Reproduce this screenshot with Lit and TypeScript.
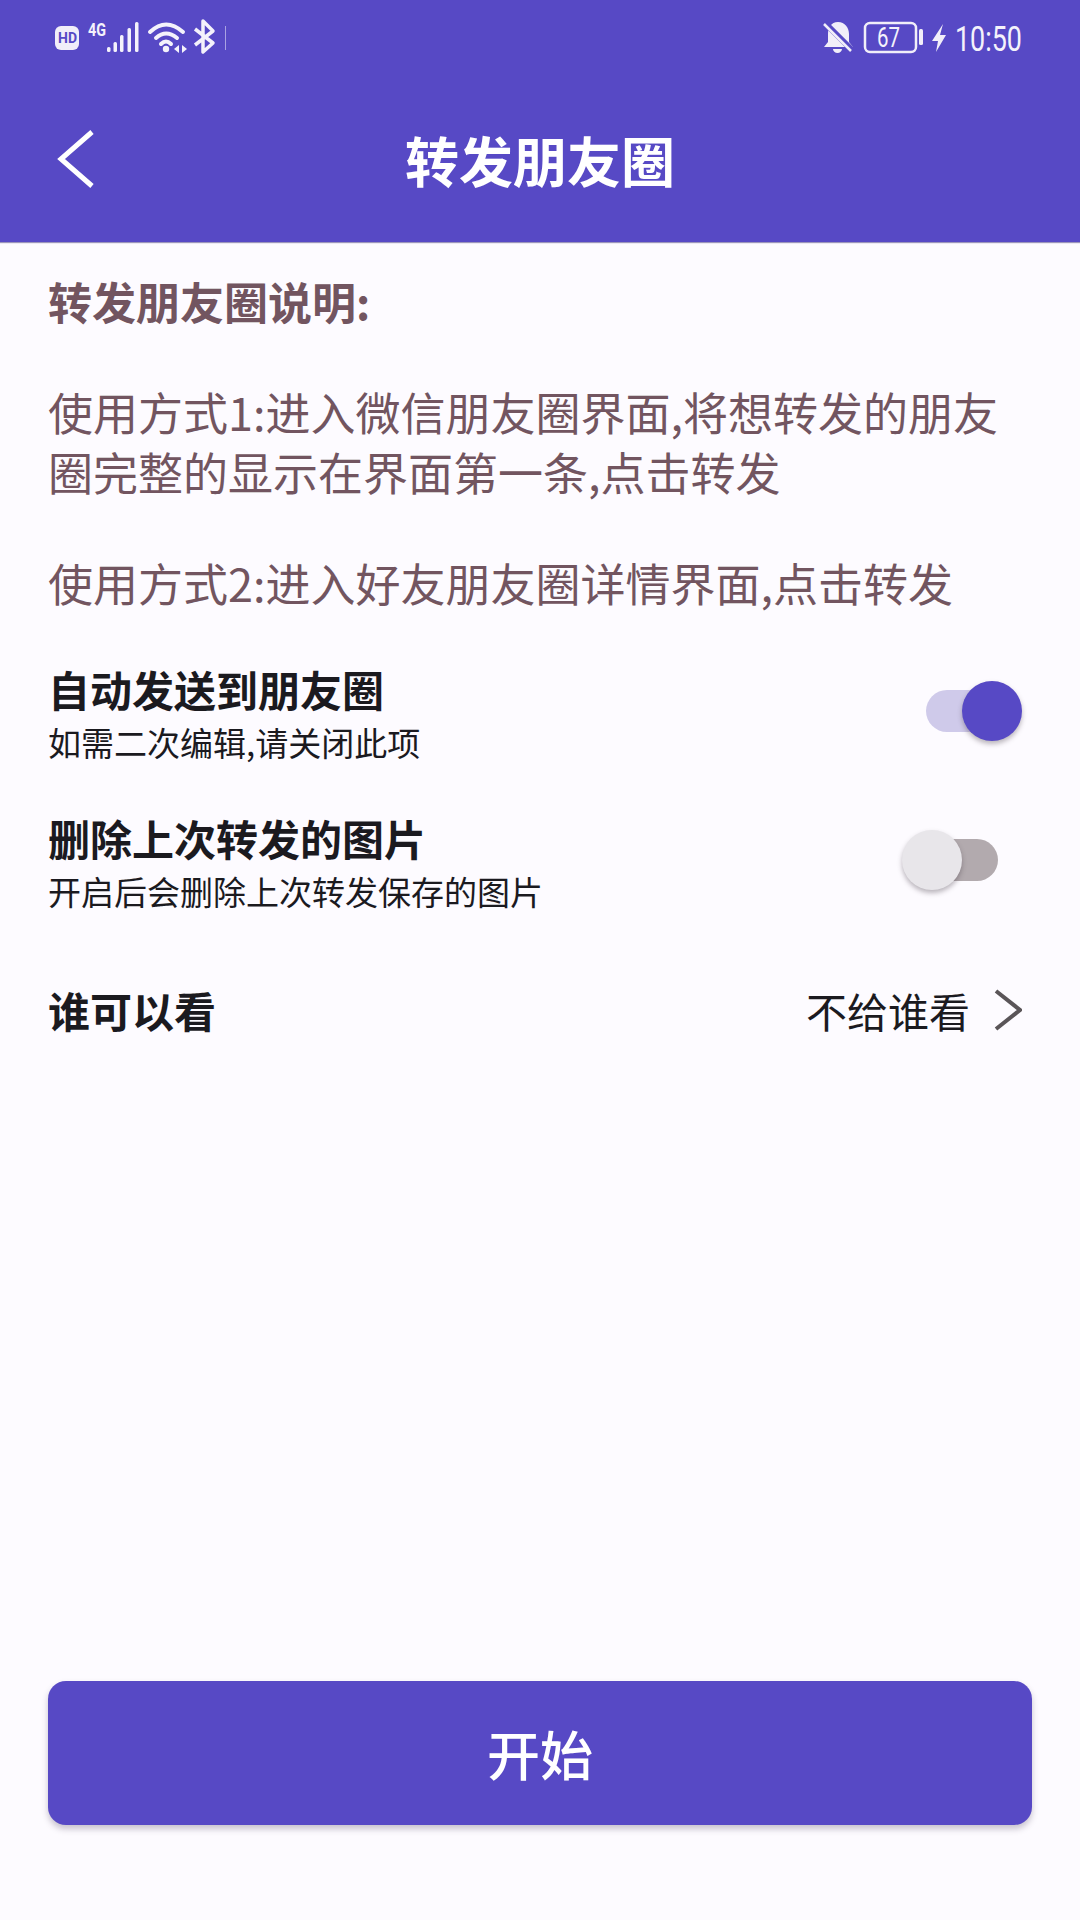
import { LitElement, html, css, svg } from "lit";
import { customElement } from "lit/decorators.js";

@customElement("app-root")
export class AppRoot extends LitElement {
  static styles = css`
    :host {
      display: flex;
      flex-direction: column;
      height: 1920px;
      background: #fdfbff;
      font-family: "Noto Sans CJK SC", "Noto Sans", sans-serif;
      color: #1b1a1f;
    }
    .header {
      background: #5749c5;
      height: 242px;
      display: flex;
      flex-direction: column;
      box-shadow: 0 1px 1px rgba(60, 50, 120, 0.5);
      flex: none;
    }
    .status {
      height: 80px;
      display: flex;
      justify-content: space-between;
      align-items: flex-start;
      padding: 0 54px 0 55px;
    }
    .status svg {
      display: block;
      overflow: visible;
    }
    .status text {
      font-family: Roboto, sans-serif;
      fill: #f4f2fb;
    }
    .toolbar {
      height: 162px;
      position: relative;
      display: flex;
      align-items: center;
      justify-content: center;
      color: #fff;
      font-size: 54px;
      line-height: 64px;
      font-weight: 700;
      padding-bottom: 2px;
      box-sizing: border-box;
    }
    .back {
      position: absolute;
      left: 54px;
      top: 47px;
    }
    .content {
      flex: 1;
      display: flex;
      flex-direction: column;
      padding: 29px 48px 95px;
    }
    .note {
      color: #725560;
      font-size: 45px;
      line-height: 60px;
      margin: 0 0 51px;
    }
    .note.head {
      font-size: 44px;
      font-weight: 700;
    }
    .note.last {
      margin-bottom: 0;
    }
    .row {
      display: flex;
      justify-content: space-between;
      align-items: center;
      height: 149px;
      margin-right: 10px;
    }
    .row.first {
      margin-top: 28px;
    }
    .title {
      font-size: 42px;
      line-height: 50px;
      font-weight: 700;
    }
    .sub {
      font-size: 33px;
      line-height: 50px;
      margin-top: 3px;
    }
    .switch {
      position: relative;
      width: 120px;
      height: 60px;
      flex: none;
      margin-bottom: 10px;
    }
    .track {
      position: absolute;
      left: 24px;
      top: 9px;
      width: 72px;
      height: 42px;
      border-radius: 21px;
    }
    .knob {
      position: absolute;
      top: 0;
      width: 60px;
      height: 60px;
      border-radius: 50%;
      box-shadow: 0 3px 5px rgba(60, 50, 60, 0.35);
    }
    .on .track {
      background: #cfcaea;
    }
    .on .knob {
      left: 60px;
      background: #5749c5;
    }
    .off .track {
      background: #b2aaae;
    }
    .off .knob {
      left: 0;
      background: #e8e6ea;
    }
    .link {
      display: flex;
      justify-content: space-between;
      align-items: center;
      height: 60px;
      margin-top: 41px;
      margin-right: 10px;
    }
    .value {
      display: flex;
      align-items: center;
      gap: 24px;
      font-size: 41px;
    }
    .button {
      margin-top: auto;
      height: 144px;
      border-radius: 18px;
      background: #5749c5;
      color: #fff;
      font-size: 53px;
      font-weight: 500;
      display: flex;
      align-items: center;
      justify-content: center;
      box-shadow: 0 4px 6px rgba(60, 50, 80, 0.28);
    }
  `;

  private statusLeft() {
    return html`<svg width="172" height="60" viewBox="55 0 172 60">
      <rect x="55" y="26" width="24" height="24" rx="6" fill="#f1eef9"></rect>
      <text x="58" y="43" font-size="14" font-weight="700" style="fill:#5749c5" textLength="19" lengthAdjust="spacingAndGlyphs">HD</text>
      <text x="88" y="36" font-size="18" font-weight="700" textLength="18" lengthAdjust="spacingAndGlyphs">4G</text>
      ${[
        [107, 47],
        [113.5, 42],
        [120, 35],
        [127.5, 28],
        [135, 22],
      ].map(
        ([x, y]) => svg`<rect x=${x} y=${y} width="3.5" height=${52 - y} rx="1.5" fill="#f4f2fb"></rect>`
      )}
      <g fill="none" stroke="#f4f2fb" stroke-width="4" stroke-linecap="round">
        <path d="M150 32 Q166 17 183 32"></path>
        <path d="M156 38 Q166 29 177 38"></path>
        <path d="M161 44 Q166 39 171 44"></path>
      </g>
      <circle cx="166" cy="49" r="3.2" fill="#f4f2fb"></circle>
      <path d="M174 49 L179 45 V53 Z M182 45 L187 49 L182 53 Z" fill="#f4f2fb"></path>
      <path d="M195 29 L213 43 L203 52 V21 L213 31 L195 45" fill="none" stroke="#f4f2fb" stroke-width="3.5" stroke-linejoin="round"></path>
      <rect x="225" y="26" width="1" height="24" fill="#a9a2e2"></rect>
    </svg>`;
  }

  private statusRight() {
    return html`<svg width="204" height="60" viewBox="822 0 204 60">
      <path d="M838 22 c-7 0 -10 6 -10 12 v8 l-4 5 h29 l-4 -5 v-8 c0 -6 -4 -12 -11 -12 Z" fill="#f1eef9"></path>
      <path d="M833 49 h9 a4.5 4 0 0 1 -9 0 Z" fill="#f1eef9"></path>
      <path d="M825 23 L852 50" stroke="#5749c5" stroke-width="6"></path>
      <path d="M824 24 L851 51" stroke="#f1eef9" stroke-width="2.5"></path>
      <rect x="865" y="23" width="51" height="29" rx="5" fill="none" stroke="#f1eef9" stroke-width="2.5"></rect>
      <text x="877" y="47" font-size="27" textLength="23" lengthAdjust="spacingAndGlyphs">67</text>
      <rect x="919" y="29" width="4" height="16" rx="1.5" fill="#f1eef9"></rect>
      <path d="M943 24 L932 41 H938 L936 52 L946 35 H940 Z" fill="#f1eef9"></path>
      <text x="955" y="51" font-size="35" textLength="67" lengthAdjust="spacingAndGlyphs">10:50</text>
    </svg>`;
  }

  render() {
    return html`
      <div class="header">
        <div class="status">${this.statusLeft()}${this.statusRight()}</div>
        <div class="toolbar">
          <svg class="back" width="44" height="64" viewBox="0 0 44 64">
            <path d="M38 5 L7 32 L38 59" fill="none" stroke="#fff" stroke-width="5"></path>
          </svg>
          转发朋友圈
        </div>
      </div>
      <div class="content">
        <p class="note head">转发朋友圈说明:</p>
        <p class="note">使用方式1:进入微信朋友圈界面,将想转发的朋友圈完整的显示在界面第一条,点击转发</p>
        <p class="note last">使用方式2:进入好友朋友圈详情界面,点击转发</p>
        <div class="row first">
          <div>
            <div class="title">自动发送到朋友圈</div>
            <div class="sub">如需二次编辑,请关闭此项</div>
          </div>
          <div class="switch on"><div class="track"></div><div class="knob"></div></div>
        </div>
        <div class="row">
          <div>
            <div class="title">删除上次转发的图片</div>
            <div class="sub">开启后会删除上次转发保存的图片</div>
          </div>
          <div class="switch off"><div class="track"></div><div class="knob"></div></div>
        </div>
        <div class="link">
          <div class="title">谁可以看</div>
          <div class="value">
            不给谁看
            <svg width="28" height="44" viewBox="0 0 28 44">
              <path d="M2 3 L26 22 L2 41" fill="none" stroke="#5a5558" stroke-width="4"></path>
            </svg>
          </div>
        </div>
        <div class="button">开始</div>
      </div>
    `;
  }
}
